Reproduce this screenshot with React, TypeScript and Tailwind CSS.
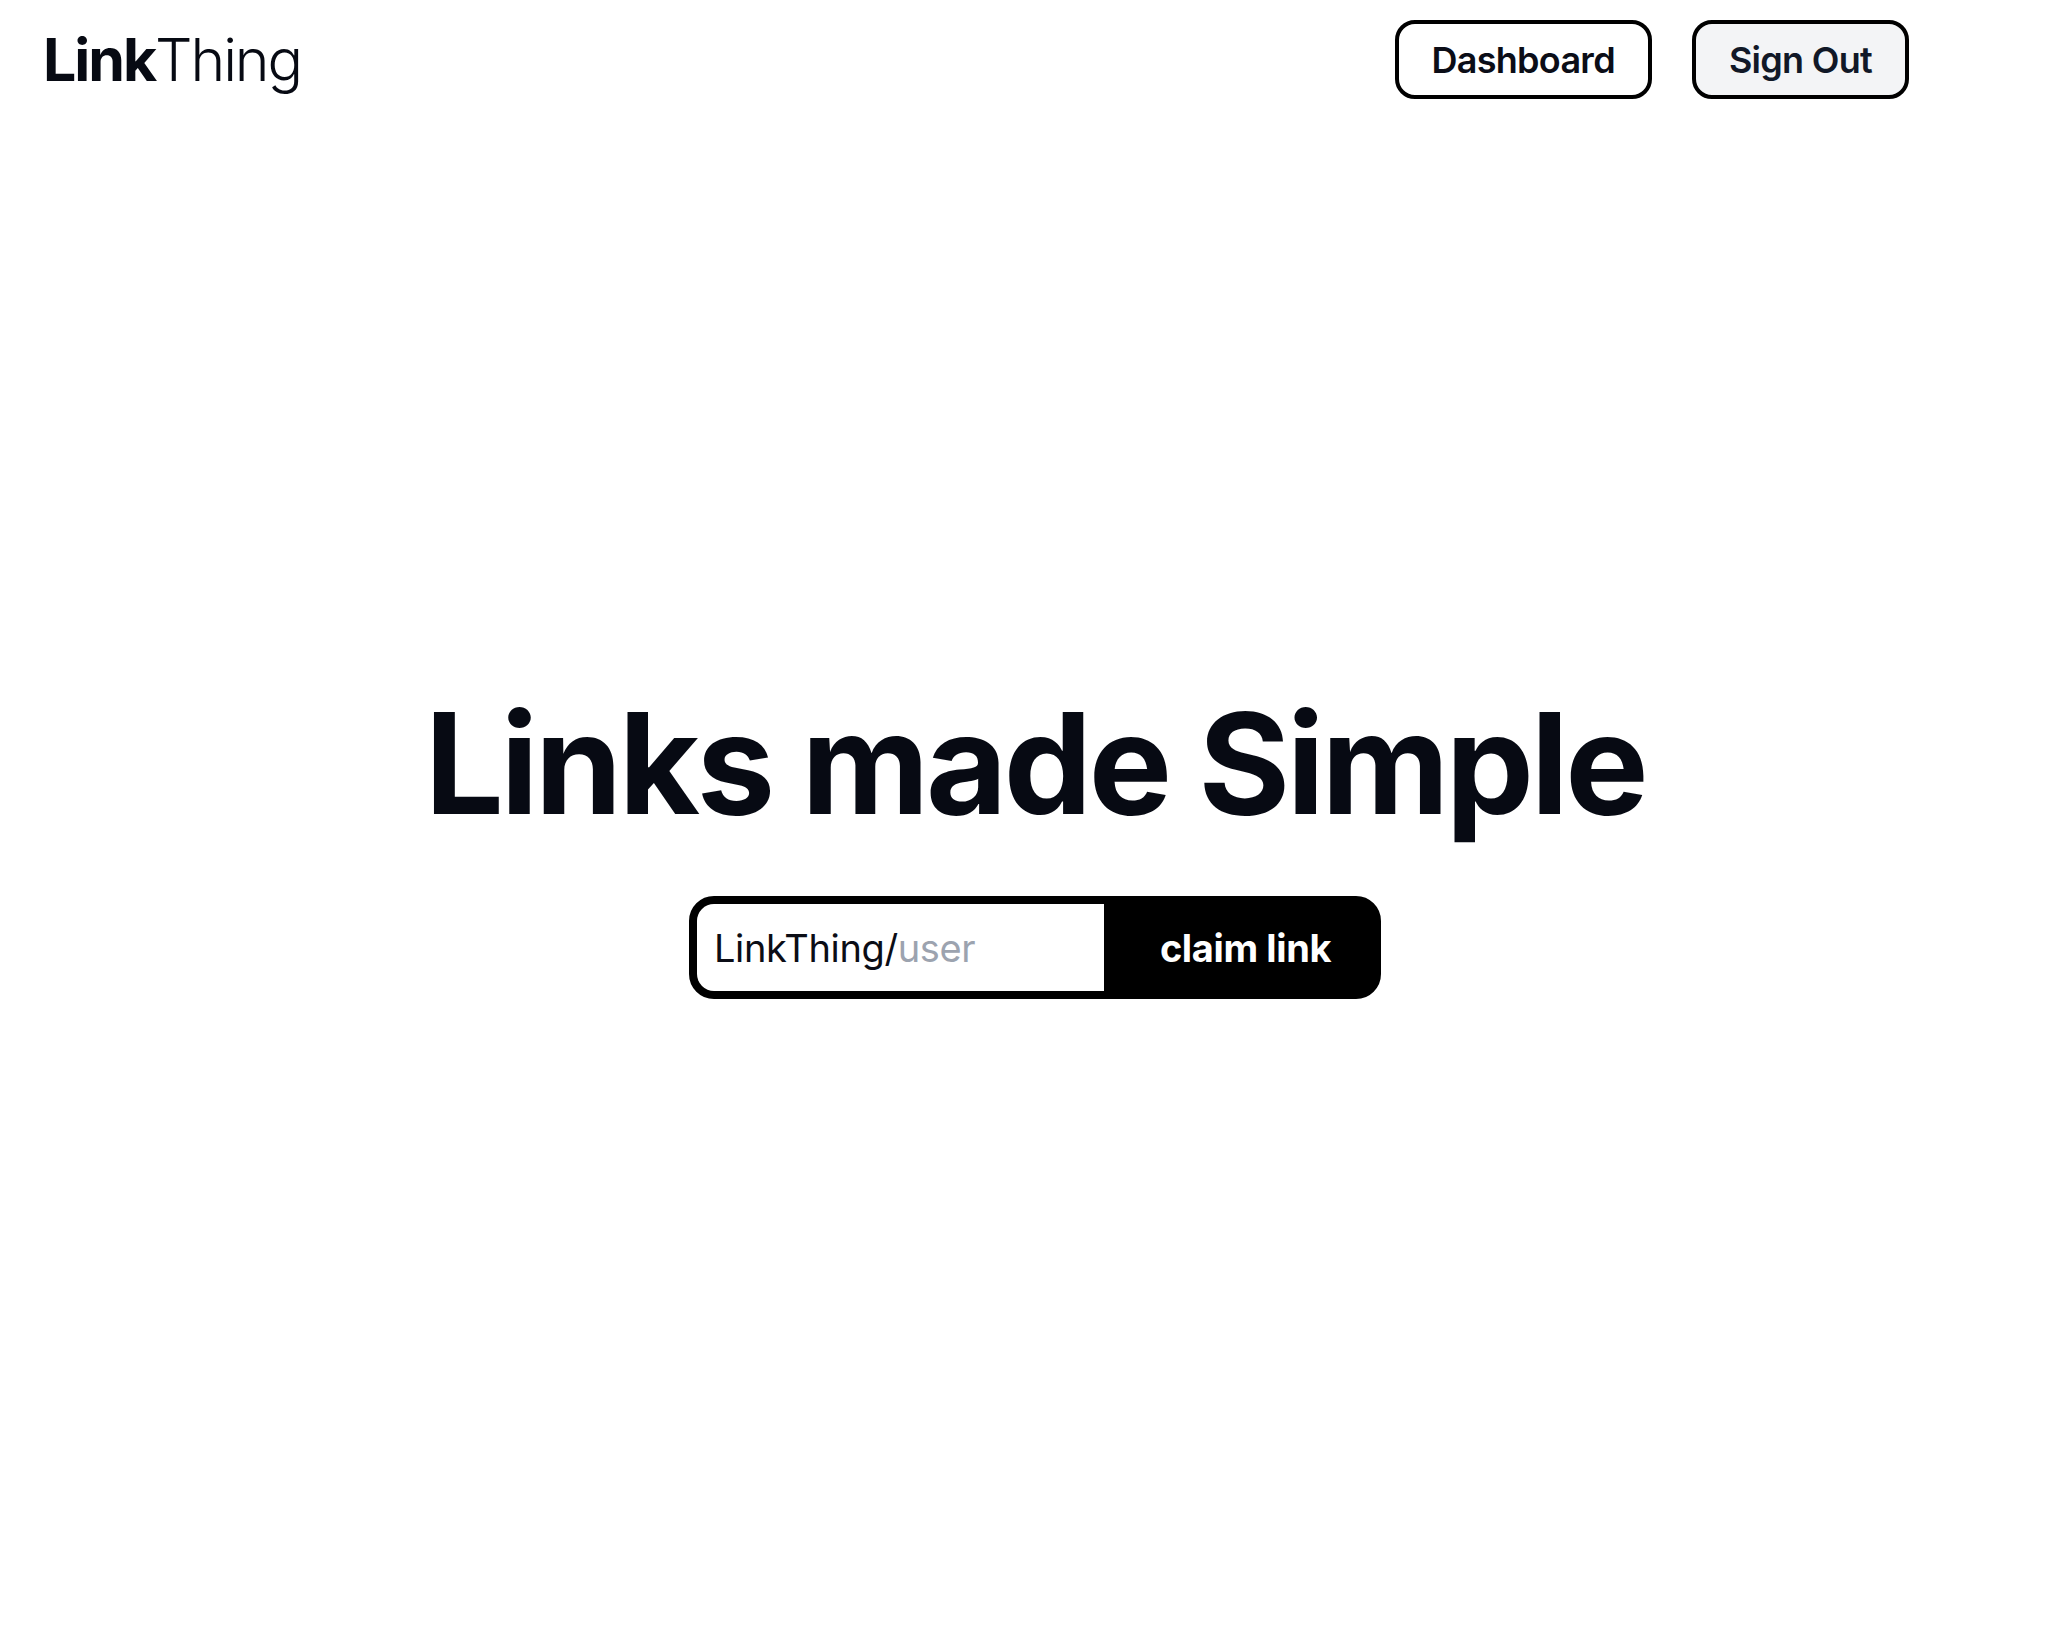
import React from "react";

export default function App() {
  return (
    <div className="min-h-[1648px] w-full bg-white text-[#070a13]" style={{ fontFamily: "Inter, 'Noto Sans', sans-serif" }}>
      <header className="flex h-[119px] items-center justify-between pl-[43px] pr-[161px]">
        <div className="text-[59px] leading-none tracking-[-0.035em]">
          <span className="font-bold">Link</span>
          <span className="font-light">Thing</span>
        </div>
        <nav className="flex items-center gap-[40px]">
          <button className="h-[79px] rounded-[20px] border-4 border-black bg-white px-[33px] text-[36px] font-semibold leading-none tracking-[-0.02em] text-[#0b0d17]">
            Dashboard
          </button>
          <button className="h-[79px] rounded-[20px] border-4 border-black bg-[#f3f4f6] px-[33px] text-[36px] font-semibold leading-none tracking-[-0.02em] text-[#111827]">
            Sign Out
          </button>
        </nav>
      </header>
      <main className="flex flex-col items-center pt-[574px]">
        <h1 className="text-[140px] font-bold leading-none tracking-[-0.024em]">Links made Simple</h1>
        <div className="mt-[63px] flex h-[103px] w-[692px] overflow-hidden rounded-[25px] border-[8px] border-black bg-black">
          <div className="flex w-[407px] items-center bg-white pl-[17px] text-[38px] leading-none tracking-[-0.01em]">
            <span className="text-[#0b0d16]">LinkThing/</span>
            <span className="text-[#9ca3af]">user</span>
          </div>
          <button className="flex flex-1 items-center justify-center bg-black pl-[14px] text-[38px] font-bold leading-none tracking-[-0.01em] text-white">
            claim link
          </button>
        </div>
      </main>
    </div>
  );
}
